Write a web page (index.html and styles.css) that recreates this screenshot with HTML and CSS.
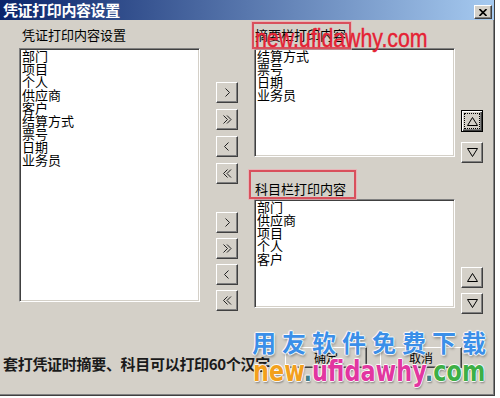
FILE: index.html
```html
<!DOCTYPE html>
<html lang="zh-CN">
<head>
  <meta charset="UTF-8">
  <meta name="viewport" content="width=device-width, initial-scale=1.0">
  <title>凭证打印内容设置</title>
  <link rel="stylesheet" href="styles.css">
</head>
<body>
  <div class="window">
    <div class="titlebar">
      <span class="title">凭证打印内容设置</span>
      <button class="btn close">
        <svg width="8" height="7" viewBox="0 0 8 7"><path d="M0.5 0 L7.5 7 M7.5 0 L0.5 7" stroke="#000" stroke-width="1.6"/></svg>
      </button>
    </div>

    <div class="top">
      <div class="col-left">
        <div class="label">凭证打印内容设置</div>
        <ul class="listbox tall">
          <li>部门</li>
          <li>项目</li>
          <li>个人</li>
          <li>供应商</li>
          <li>客户</li>
          <li>结算方式</li>
          <li>票号</li>
          <li>日期</li>
          <li>业务员</li>
        </ul>
      </div>

      <div class="col-move">
        <div class="move-group first">
          <button class="btn small"><svg width="8" height="9" viewBox="0 0 8 9"><path d="M2.5 0.5 L6.5 4.5 L2.5 8.5" fill="none" stroke="#222"/></svg></button>
          <button class="btn small"><svg width="9" height="9" viewBox="0 0 9 9"><path d="M0.5 0.5 L4.5 4.5 L0.5 8.5 M4 0.5 L8 4.5 L4 8.5" fill="none" stroke="#222"/></svg></button>
          <button class="btn small"><svg width="8" height="9" viewBox="0 0 8 9"><path d="M5.5 0.5 L1.5 4.5 L5.5 8.5" fill="none" stroke="#222"/></svg></button>
          <button class="btn small"><svg width="9" height="9" viewBox="0 0 9 9"><path d="M4.5 0.5 L0.5 4.5 L4.5 8.5 M8 0.5 L4 4.5 L8 8.5" fill="none" stroke="#222"/></svg></button>
        </div>
        <div class="move-group second">
          <button class="btn small"><svg width="8" height="9" viewBox="0 0 8 9"><path d="M2.5 0.5 L6.5 4.5 L2.5 8.5" fill="none" stroke="#222"/></svg></button>
          <button class="btn small"><svg width="9" height="9" viewBox="0 0 9 9"><path d="M0.5 0.5 L4.5 4.5 L0.5 8.5 M4 0.5 L8 4.5 L4 8.5" fill="none" stroke="#222"/></svg></button>
          <button class="btn small"><svg width="8" height="9" viewBox="0 0 8 9"><path d="M5.5 0.5 L1.5 4.5 L5.5 8.5" fill="none" stroke="#222"/></svg></button>
          <button class="btn small"><svg width="9" height="9" viewBox="0 0 9 9"><path d="M4.5 0.5 L0.5 4.5 L4.5 8.5 M8 0.5 L4 4.5 L8 8.5" fill="none" stroke="#222"/></svg></button>
        </div>
      </div>

      <div class="col-right">
        <div class="label marked mark-one">摘要栏打印内容</div>
        <ul class="listbox short">
          <li>结算方式</li>
          <li>票号</li>
          <li>日期</li>
          <li>业务员</li>
        </ul>
        <div class="label marked mark-two">科目栏打印内容</div>
        <ul class="listbox short">
          <li>部门</li>
          <li>供应商</li>
          <li>项目</li>
          <li>个人</li>
          <li>客户</li>
        </ul>
      </div>

      <div class="col-order">
        <div class="order-group first">
          <button class="btn small focused"><span class="focus-ring"><svg width="11" height="9" viewBox="0 0 11 9"><path d="M5.5 0.5 L10.5 8.5 L0.5 8.5 Z" fill="none" stroke="#000"/></svg></span></button>
          <button class="btn small"><svg width="11" height="9" viewBox="0 0 11 9"><path d="M0.5 0.5 L10.5 0.5 L5.5 8.5 Z" fill="none" stroke="#000"/></svg></button>
        </div>
        <div class="order-group second">
          <button class="btn small"><svg width="11" height="9" viewBox="0 0 11 9"><path d="M5.5 0.5 L10.5 8.5 L0.5 8.5 Z" fill="none" stroke="#000"/></svg></button>
          <button class="btn small"><svg width="11" height="9" viewBox="0 0 11 9"><path d="M0.5 0.5 L10.5 0.5 L5.5 8.5 Z" fill="none" stroke="#000"/></svg></button>
        </div>
      </div>
    </div>

    <div class="bottom">
      <p class="note">套打凭证时摘要、科目可以打印60个汉字</p>
      <div class="actions">
        <button class="btn wide">确定</button>
        <button class="btn wide">取消</button>
      </div>
    </div>

    <!-- watermarks laid over the dialog -->
    <div class="wm-red">new.ufidawhy.com</div>
    <div class="wm-blue">用友软件免费下载</div>
    <div class="wm-site"><span class="s-new">new</span><span class="s-dot">.</span><span class="s-name">ufidawhy</span><span class="s-dot">.</span><span class="s-com">com</span></div>
  </div>
</body>
</html>
```

FILE: styles.css
```css
html {
  background: #ffffff;
}

body {
  margin: 0;
  font-family: "Noto Sans CJK SC", sans-serif;
  font-size: 13px;
  color: #000000;
}

.window {
  position: relative;
  width: 494px;
  height: 395px;
  background: #d4d0c8;
  border-right: 1px solid #404040;
  border-bottom: 1px solid #404040;
  box-shadow: inset -1px -1px #808080;
  overflow: hidden;
}

.titlebar {
  height: 20px;
  display: flex;
  justify-content: space-between;
  align-items: flex-start;
  background: linear-gradient(to right, #0a246a, #a6caf0);
}

.title {
  color: #ffffff;
  font-weight: bold;
  font-size: 15px;
  line-height: 20px;
  padding-left: 3px;
  letter-spacing: -0.4px;
}

.btn {
  display: flex;
  align-items: center;
  justify-content: center;
  box-sizing: border-box;
  padding: 0;
  margin: 0;
  background: #d4d0c8;
  border: 1px solid;
  border-color: #ffffff #404040 #404040 #ffffff;
  box-shadow: inset -1px -1px #808080;
  font-family: "Noto Sans CJK SC", sans-serif;
  font-size: 13px;
  color: #000000;
}

.close {
  width: 18px;
  height: 14px;
  margin: 5px 2px 0 0;
}

.top {
  display: flex;
  align-items: flex-start;
  padding-left: 19px;
}

.label {
  margin: 8px 0 7px 3px;
  line-height: 13px;
  height: 13px;
}

.listbox {
  list-style: none;
  margin: 0;
  padding: 0 2px;
  box-sizing: border-box;
  background: #ffffff;
  border: 1px solid;
  border-color: #808080 #ffffff #ffffff #808080;
  box-shadow: inset 1px 1px #404040, inset -1px -1px #d4d0c8;
  line-height: 13px;
}

.tall {
  width: 181px;
  height: 254px;
}

.short {
  width: 201px;
  height: 109px;
}

.col-move {
  margin-left: 16px;
  display: flex;
  flex-direction: column;
}

.move-group {
  display: flex;
  flex-direction: column;
}

.move-group.first {
  margin-top: 62px;
  gap: 6px;
}

.move-group.second {
  margin-top: 28px;
  gap: 5px;
}

.small {
  width: 22px;
  height: 21px;
}

.col-right {
  margin-left: 16px;
  display: flex;
  flex-direction: column;
}

.col-right .label {
  margin-left: 1px;
}

.col-right .mark-two {
  margin: 25px 0 4px 1px;
}

.marked {
  position: relative;
}

/* red boxes drawn over the two captions */
.marked::after {
  content: "";
  position: absolute;
  border: 2px solid #d9505c;
  box-shadow: 0 0 0 1px rgba(240, 170, 176, 0.7);
}

.mark-one::after {
  left: -3px;
  top: -6px;
  width: 95px;
  height: 23px;
}

.mark-two::after {
  left: -6px;
  top: -12px;
  width: 103px;
  height: 25px;
}

.col-order {
  margin-left: 6px;
  display: flex;
  flex-direction: column;
}

.order-group {
  display: flex;
  flex-direction: column;
}

.order-group.first {
  margin-top: 90px;
  gap: 10px;
}

.order-group.second {
  margin-top: 104px;
  gap: 5px;
}

.focused {
  height: 22px;
  border: 1px solid #000000;
  box-shadow: inset 1px 1px #ffffff, inset -1px -1px #404040, inset -2px -2px #808080;
}

.focus-ring {
  display: flex;
  align-items: center;
  justify-content: center;
  width: 14px;
  height: 14px;
  border: 1px dotted #000000;
}

.bottom {
  display: flex;
  align-items: flex-start;
  margin-top: 33px;
  padding-left: 3px;
}

.note {
  margin: 9px 0 0 0;
  font-size: 15px;
  line-height: 15px;
  font-weight: bold;
  color: #1a1a1a;
  letter-spacing: -0.3px;
}

.actions {
  display: flex;
  gap: 13px;
  margin-left: auto;
  margin-right: 32px;
}

.wide {
  width: 82px;
  height: 21px;
  font-size: 12px;
}

.wm-red,
.wm-blue,
.wm-site {
  position: absolute;
  white-space: nowrap;
}

.wm-red {
  left: 255px;
  top: 25px;
  font-family: "Liberation Sans", sans-serif;
  font-size: 26px;
  line-height: 26px;
  color: #e52235;
  -webkit-text-stroke: 0.4px #e52235;
  transform: scaleX(0.82);
  transform-origin: left top;
}

.wm-blue {
  left: 252px;
  top: 330px;
  font-size: 24px;
  line-height: 24px;
  font-weight: bold;
  letter-spacing: 6px;
  color: #3b8fe8;
  text-shadow: 0 0 1px #fff, 1px 0 1px #fff, -1px 0 1px #fff, 0 1px 1px #fff, 0 -1px 1px #fff, 1px 2px 3px rgba(0, 0, 0, 0.45);
}

.wm-site {
  left: 253px;
  top: 358px;
  font-family: "DejaVu Sans", sans-serif;
  font-weight: bold;
  font-size: 28px;
  line-height: 28px;
  transform: scaleX(0.8);
  transform-origin: left top;
  text-shadow: 0 0 1px #fff, 1px 0 1px #fff, -1px 0 1px #fff, 0 1px 1px #fff, 0 -1px 1px #fff, 1px 2px 2px rgba(0, 0, 0, 0.4);
}

.s-new {
  color: #f2a01c;
}

.s-dot {
  color: #3f7f8a;
}

.s-name {
  color: #e236a0;
}

.s-com {
  color: #3daf46;
}
```
